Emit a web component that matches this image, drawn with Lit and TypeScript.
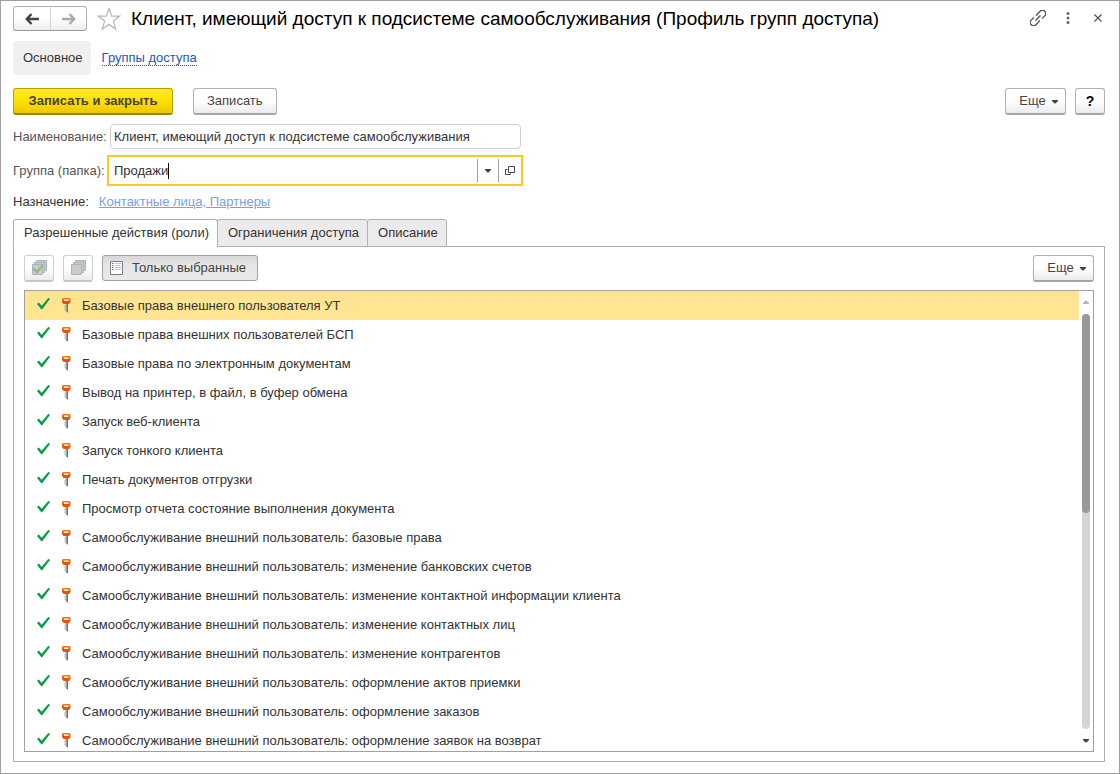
import { LitElement, html, css, svg } from "lit";
import { customElement, state } from "lit/decorators.js";
import { classMap } from "lit/directives/class-map.js";

const ROLES = [
  "Базовые права внешнего пользователя УТ",
  "Базовые права внешних пользователей БСП",
  "Базовые права по электронным документам",
  "Вывод на принтер, в файл, в буфер обмена",
  "Запуск веб-клиента",
  "Запуск тонкого клиента",
  "Печать документов отгрузки",
  "Просмотр отчета состояние выполнения документа",
  "Самообслуживание внешний пользователь: базовые права",
  "Самообслуживание внешний пользователь: изменение банковских счетов",
  "Самообслуживание внешний пользователь: изменение контактной информации клиента",
  "Самообслуживание внешний пользователь: изменение контактных лиц",
  "Самообслуживание внешний пользователь: изменение контрагентов",
  "Самообслуживание внешний пользователь: оформление актов приемки",
  "Самообслуживание внешний пользователь: оформление заказов",
  "Самообслуживание внешний пользователь: оформление заявок на возврат",
];

const TABS = ["Разрешенные действия (роли)", "Ограничения доступа", "Описание"];

const arrow = html`<svg width="14" height="12" viewBox="0 0 14 12" aria-hidden="true">
  <path d="M1.500 6H14M6.500 1L1.800 6l4.700 5" fill="none" stroke="currentColor" stroke-width="2.500" />
</svg>`;

const star = html`<svg width="24" height="24" viewBox="0 0 24 24" aria-hidden="true">
  <path d="M12 1.500l2.700 7.600h8l-6.300 5 2.300 8L12 17.400l-6.700 4.700 2.300-8-6.300-5h8z" fill="#fff" stroke="#b4bac2" stroke-width="1.300" />
</svg>`;

const linkIcon = html`<svg width="16" height="16" viewBox="0 0 16 16" fill="none" stroke="#505050" stroke-width="1.300" aria-hidden="true">
  <g transform="rotate(-45 8 8)">
    <path d="M6.200 4.700H2.300a3.300 3.300 0 0 0 0 6.600H6A2.500 2.500 0 0 0 8 10.300" transform="translate(-.6 0)" />
    <path d="M9.800 11.300H13.700a3.300 3.300 0 0 0 0-6.600H10A2.500 2.500 0 0 0 8 5.700" transform="translate(.6 0)" />
    <path d="M4.500 8h7" />
  </g>
</svg>`;

const dots = html`<svg width="4" height="12" viewBox="0 0 4 12" fill="#666" aria-hidden="true">
  <circle cx="2" cy="1.600" r="1.500" /><circle cx="2" cy="6" r="1.500" /><circle cx="2" cy="10.400" r="1.500" />
</svg>`;

const cross = html`<svg width="8" height="8" viewBox="0 0 8 8" aria-hidden="true">
  <path d="M.5 .5l7 7M7.500 .5l-7 7" stroke="#505050" stroke-width="1.200" />
</svg>`;

const caretDown = html`<svg width="6" height="4" viewBox="0 0 6 4" aria-hidden="true">
  <path d="M0 0h6v1L3.500 3.500h-1L0 1z" fill="#444" />
</svg>`;

const openIcon = html`<svg width="10" height="10" viewBox="0 0 10 10" fill="none" stroke="#444" aria-hidden="true">
  <path d="M3.500 .5h6v6h-6zM2.500 3.500h-2v5h5v-1" />
</svg>`;

const stack = (checked: boolean) => html`<svg width="16" height="16" viewBox="0 0 16 16" aria-hidden="true">
  <g stroke="#a9b5bc">
    <path d="M5.500 .5h10v10h-10z" fill="#c3cbcf" />
    <path d="M3.500 2.500h10v10h-10z" fill="#c3cbcf" />
    <path d="M1.500 4.500h10v10h-10z" fill="#c9cbcc" />
  </g>
  ${checked ? svg`<path d="M2.500 8.500l3.300 3.500L12 5" fill="none" stroke="#9bb488" stroke-width="2.400" />` : null}
</svg>`;

const listIcon = html`<svg width="13" height="14" viewBox="0 0 13 14" aria-hidden="true">
  <path d="M.5 .5h12v13H.5z" fill="#fff" stroke="#6f8391" />
  <path d="M2 2.500h1.500M2 4.500h1.500M2 6.500h1.500M2 8.500h1.500" stroke="#5d7485" />
  <path d="M5 2.500h6M5 4.500h6M5 6.500h6M5 8.500h6" stroke="#bccad3" />
</svg>`;

const key = html`<svg class="key" width="9" height="15" viewBox="0 0 9 15" aria-hidden="true">
  <path d="M3.500 5.500H6V14l-1 .5L3.500 13z" fill="#a0a0a0" />
  <path d="M5 5.500h1V14l-1 .5z" fill="#707070" />
  <path d="M2.500 8h1v1.500h-1zM2.500 10.500h1V12h-1z" fill="#a8a8a8" />
  <path d="M1.500 0h5.500Q8.500 0 8.500 1.500v2.500L7 6H1.500L0 4V1.500Q0 0 1.500 0z" fill="#e0560c" />
  <path d="M1.500 .3h5.500l1 1.200v1H.5v-1z" fill="#ee8420" />
  <path d="M2 1.500h4.500V3H2z" fill="#ffedc4" />
</svg>`;

@customElement("app-root")
export class AppRoot extends LitElement {
  @state() private activeTab = 0;
  @state() private activeRow = 0;
  @state() private onlySelected = true;

  static styles = css`
    :host {
      display: block;
      font: 13px/16px "Liberation Sans", Arial, sans-serif;
      color: #333;
    }
    * { box-sizing: border-box; }
    button, input { font: inherit; color: inherit; margin: 0; }
    svg { display: block; flex: none; }

    .window {
      display: flex;
      flex-direction: column;
      height: 100vh;
      min-height: 400px;
      padding: 5px 14px 11px 12px;
      border: 1px solid #a0a0a0;
      background: #fff;
    }

    .header { display: flex; align-items: center; height: 25px; }
    .history {
      display: flex;
      border: 1px solid #b0b0b0;
      border-bottom-color: #999;
      border-radius: 3px;
      background: linear-gradient(#fff 50%, #ececec);
    }
    .history button {
      display: grid;
      place-items: center;
      width: 36px;
      height: 23px;
      padding: 0;
      border: 0;
      background: none;
      color: #444;
    }
    .history .forward { border-left: 1px solid #d5d5d5; color: #aaa; }
    .forward svg { transform: scaleX(-1); }
    .icon {
      display: grid;
      place-items: center;
      padding: 0;
      border: 0;
      background: none;
    }
    .favorite { margin: 0 10px; }
    h1 {
      flex: 1;
      min-width: 0;
      margin: 0;
      font-size: 19px;
      line-height: 24px;
      font-weight: 400;
      color: #000;
      white-space: nowrap;
      overflow: hidden;
    }
    .window-tools { display: flex; align-items: center; margin-right: -8px; padding-bottom: 2px; }
    .window-tools .icon { width: 30px; height: 24px; }

    .nav { display: flex; align-items: center; gap: 11px; margin-top: 10px; }
    .nav a { color: #1f57b5; text-decoration: none; border-bottom: 1px dotted #1f57b5; line-height: 14px; }
    .nav .current {
      padding: 9px 8px 9px 10px;
      border: 0;
      border-radius: 4px;
      background: #f0f0f0;
      color: #333;
      line-height: 16px;
    }

    .bar { display: flex; align-items: center; }
    .commands { margin: 13px 0 0; gap: 20px; }
    .spacer { flex: 1; }
    .pair { display: flex; gap: 9px; }
    .btn {
      display: inline-flex;
      align-items: center;
      justify-content: center;
      height: 27px;
      padding: 0 13px;
      border: 1px solid #b0b0b0;
      border-bottom: 2px solid #a6a6a6;
      border-radius: 3px;
      background: linear-gradient(#fff 50%, #ebebeb);
      color: #444;
      white-space: nowrap;
    }
    .primary {
      min-width: 160px;
      border-color: #b5a000 #b5a000 #998700;
      background: linear-gradient(#ffe92e, #ffe000 50%, #ecc800);
      font-weight: 700;
    }
    .more { min-width: 61px; gap: 6px; padding: 0 6px 0 12px; }
    .more svg { margin-top: 2px; }
    .help { width: 30px; padding: 0; color: #000; font-weight: 700; font-size: 14px; }

    .form { display: grid; grid-template-columns: 94px minmax(0, 416px); align-items: center; margin-top: 9px; }
    .form label { color: #555; white-space: nowrap; }
    .name {
      height: 25px;
      margin: 0 2px 0 3px;
      padding: 0 3px;
      border: 1px solid #d0d0d0;
      border-radius: 4px;
      background: #fff;
      color: #333;
      outline: 0;
      min-width: 0;
    }
    .combo {
      display: flex;
      align-items: center;
      height: 31px;
      margin: 6px 0 0;
      padding: 2px 0;
      border: 2px solid #fac81e;
      background: #fff;
      color: #333;
    }
    .group-label { margin-top: 6px; }
    .combo input { field-sizing: content; min-width: 0; padding: 0 0 0 5px; border: 0; outline: 0; background: none; }
    .caret { width: 1px; height: 16px; background: #000; }
    .combo button {
      display: grid;
      place-items: center;
      height: 23px;
      width: 21px;
      padding: 0;
      border: 0;
      border-left: 1px solid #a0a0a0;
      background: none;
    }
    .combo .open { width: 23px; padding-right: 1px; }

    .purpose { display: flex; gap: 10px; margin-top: 8px; color: #333; }
    .purpose a { color: #7da0d8; text-decoration: underline; }

    .tabs { display: flex; margin-top: 9px; position: relative; z-index: 1; }
    .tab {
      height: 28px;
      margin-left: -1px;
      padding: 0 8px 1px 10px;
      border: 1px solid #b0b0b0;
      border-radius: 3px 3px 0 0;
      background: #ebebeb;
      color: #333;
      white-space: nowrap;
    }
    .tab:first-child { margin-left: 0; }
    .tab.active { border-bottom-color: #fff; background: #fff; }

    .panel {
      display: flex;
      flex-direction: column;
      flex: 1;
      min-height: 0;
      margin-top: -1px;
      padding: 8px 10px 9px;
      border: 1px solid #b0b0b0;
    }
    .list-tools { gap: 9px; align-items: flex-start; }
    .square { width: 30px; padding: 0; border-color: #d0d0d0 #d0d0d0 #c6c6c6; }
    .toggle { gap: 9px; padding: 0 11px 0 7px; }
    .toggle[aria-pressed="true"] { border: 1px solid #a0a0a0; background: linear-gradient(#d8d8d8, #e6e6e6 40%, #e9e9e9); height: 26px; }

    .list {
      display: flex;
      flex: 1;
      min-height: 0;
      margin-top: 8px;
      border: 1px solid #a0a0a0;
    }
    .rows { flex: 1; min-width: 0; margin: 0; padding: 0; list-style: none; overflow: hidden; }
    .row {
      display: flex;
      align-items: center;
      height: 29px;
      padding-left: 12px;
      white-space: nowrap;
    }
    .row.active { background: #ffe591; }
    .row label { display: flex; align-items: center; }
    .row input { appearance: none; width: 13px; height: 12px; margin-bottom: 4px; }
    .row input:checked {
      background: #0a9b4b;
      clip-path: polygon(0 54%, 14% 42%, 36% 68%, 88% 2%, 100% 12%, 40% 98%, 33% 98%);
    }
    .key { margin: 0 11px 0 12px; }
    .scroll {
      display: flex;
      flex-direction: column;
      align-items: center;
      width: 14px;
      padding: 9px 0 8px;
    }
    .track { flex: 1; width: 8px; margin: 10px 0; border-radius: 4px; background: #d5d5d5; }
    .thumb { height: 48%; border-radius: 4px; background: #999; }
    .up { transform: scaleY(-1); opacity: .4; }
  `;

  render() {
    return html`
      <main class="window">
        <header class="header">
          <div class="history">
            <button class="back" aria-label="Назад">${arrow}</button>
            <button class="forward" aria-label="Вперед">${arrow}</button>
          </div>
          <button class="icon favorite" aria-label="В избранное">${star}</button>
          <h1>Клиент, имеющий доступ к подсистеме самообслуживания (Профиль групп доступа)</h1>
          <div class="window-tools">
            <button class="icon" aria-label="Ссылка">${linkIcon}</button>
            <button class="icon" aria-label="Меню">${dots}</button>
            <button class="icon" aria-label="Закрыть">${cross}</button>
          </div>
        </header>

        <nav class="nav">
          <a class="current" href="#main">Основное</a>
          <a href="#groups">Группы доступа</a>
        </nav>

        <div class="bar commands">
          <button class="btn primary">Записать и закрыть</button>
          <button class="btn">Записать</button>
          <span class="spacer"></span>
          <div class="pair">
            <button class="btn more">Еще ${caretDown}</button>
            <button class="btn help" aria-label="Справка">?</button>
          </div>
        </div>

        <div class="form">
          <label for="name">Наименование:</label>
          <input class="name" id="name" type="text" value="Клиент, имеющий доступ к подсистеме самообслуживания" />
          <label class="group-label" for="group">Группа (папка):</label>
          <div class="combo">
            <input id="group" type="text" value="Продажи" />
            <span class="caret"></span>
            <span class="spacer"></span>
            <button aria-label="Выбрать">${caretDown}</button>
            <button class="open" aria-label="Открыть">${openIcon}</button>
          </div>
        </div>

        <div class="purpose">
          <span>Назначение:</span>
          <a href="#purpose">Контактные лица, Партнеры</a>
        </div>

        <div class="tabs" role="tablist">
          ${TABS.map(
            (title, i) => html`<button
              class=${classMap({ tab: true, active: i === this.activeTab })}
              role="tab"
              aria-selected=${i === this.activeTab}
              @click=${() => (this.activeTab = i)}
            >${title}</button>`
          )}
        </div>

        <section class="panel" role="tabpanel">
          <div class="bar list-tools">
            <button class="btn square" aria-label="Установить все флажки">${stack(true)}</button>
            <button class="btn square" aria-label="Снять все флажки">${stack(false)}</button>
            <button
              class="btn toggle"
              aria-pressed=${this.onlySelected}
              @click=${() => (this.onlySelected = !this.onlySelected)}
            >${listIcon}Только выбранные</button>
            <span class="spacer"></span>
            <button class="btn more">Еще ${caretDown}</button>
          </div>

          <div class="list">
            <ul class="rows">
              ${ROLES.map(
                (role, i) => html`<li
                  class=${classMap({ row: true, active: i === this.activeRow })}
                  @click=${() => (this.activeRow = i)}
                >
                  <label><input type="checkbox" checked />${key}${role}</label>
                </li>`
              )}
            </ul>
            <div class="scroll" aria-hidden="true">
              <span class="up">${caretDown}</span>
              <div class="track"><div class="thumb"></div></div>
              ${caretDown}
            </div>
          </div>
        </section>
      </main>
    `;
  }
}
